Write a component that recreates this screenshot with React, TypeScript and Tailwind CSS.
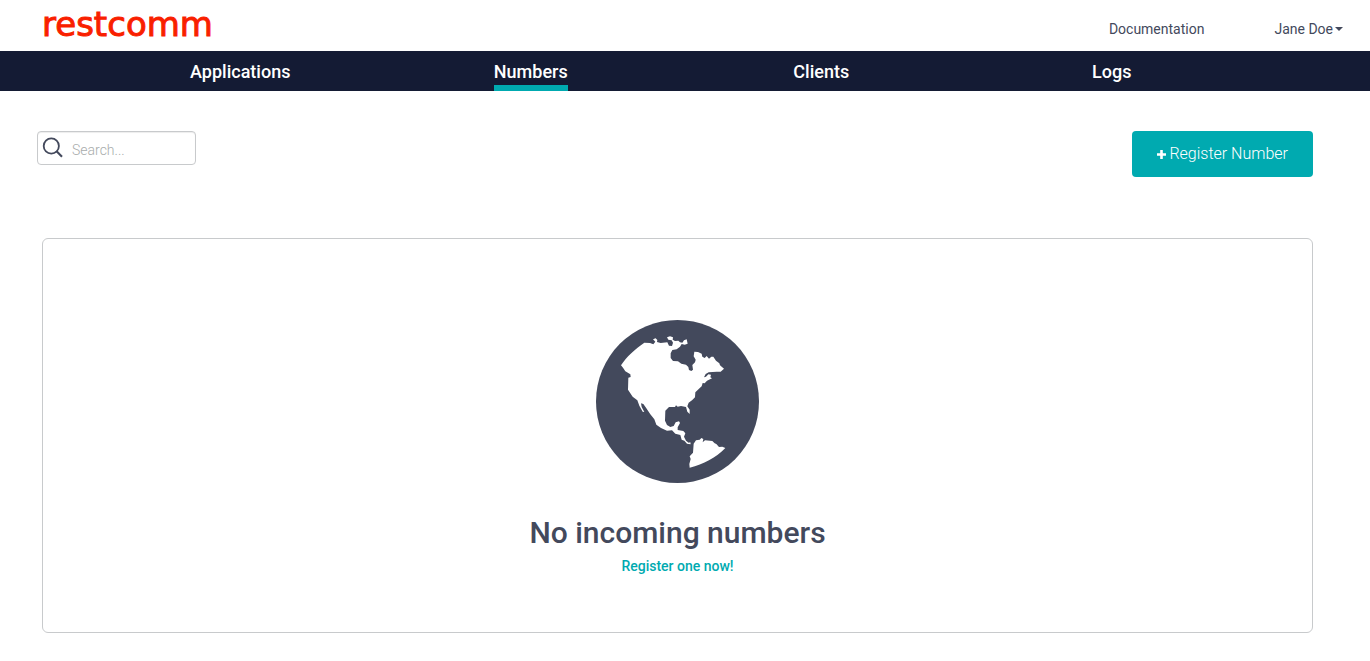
import React from 'react';

const navItems = [
  { label: 'Applications', active: false },
  { label: 'Numbers', active: true },
  { label: 'Clients', active: false },
  { label: 'Logs', active: false },
];

function Header() {
  return (
    <header className="flex h-[51px] items-start justify-between pl-[42px] pr-[27px]">
      <a
        href="#home"
        className="pt-1 font-['DejaVu_Sans',sans-serif] text-[34px] leading-10 text-[#f91f00] [-webkit-text-stroke:1px_#f91f00]"
      >
        restcomm
      </a>
      <div className="flex items-center gap-[70px] pt-[19px] text-sm text-[#43495c]">
        <a href="#documentation">Documentation</a>
        <button type="button" className="flex items-center gap-[2px]">
          Jane Doe
          <svg viewBox="0 0 8 4" className="h-1 w-2" fill="currentColor" aria-hidden="true">
            <path d="M0 0h8L4 4z" />
          </svg>
        </button>
      </div>
    </header>
  );
}

function MainNav() {
  return (
    <nav className="flex h-10 bg-[#141b34] pl-[95px] pr-[113px]">
      {navItems.map((item) => (
        <div key={item.label} className="flex flex-1 justify-center">
          <a
            href={`#${item.label.toLowerCase()}`}
            aria-current={item.active ? 'page' : undefined}
            className={
              item.active
                ? 'border-b-6 border-[#00aab0] pt-[7px] text-lg font-medium leading-7 text-white'
                : 'border-b-6 border-transparent pt-[7px] text-lg font-medium leading-7 text-white'
            }
          >
            {item.label}
          </a>
        </div>
      ))}
    </nav>
  );
}

function Toolbar() {
  return (
    <div className="flex items-start justify-between pl-[37px] pr-[57px]">
      <label className="flex h-[34px] w-[159px] items-center rounded border border-[#c8cacc] pl-1 shadow-[inset_0_1px_1px_rgba(0,0,0,0.075)]">
        <span className="sr-only">Search numbers</span>
        <svg viewBox="0 0 22 22" className="size-[22px] shrink-0" fill="none" stroke="#43495c" aria-hidden="true">
          <circle cx="9.3" cy="9" r="7.6" strokeWidth="1.8" />
          <path d="M14.6 14.3 20 19.8" strokeWidth="2.1" />
        </svg>
        <input
          type="text"
          placeholder="Search..."
          className="ml-2 h-full w-full min-w-0 bg-transparent pt-1 text-sm font-light text-[#43495c] outline-none placeholder:text-[#a8acac]"
        />
      </label>
      <button
        type="button"
        className="flex h-[46px] items-center justify-center gap-[3px] rounded bg-[#00aab0] px-[25px] text-base font-light text-white"
      >
        <svg viewBox="0 0 9 9" className="size-[9px]" fill="none" stroke="currentColor" strokeWidth="2.6" aria-hidden="true">
          <path d="M4.5 0v9M0 4.5h9" />
        </svg>
        Register Number
      </button>
    </div>
  );
}

function Globe() {
  return (
    <svg viewBox="18 29 489 489" className="size-[163px]" aria-hidden="true">
      <circle cx="262.5" cy="273.5" r="244.5" fill="#43495c" />
      <g fill="#fff">
        <path d="M93 165 C110 139 135 116 163 97 L180 98 L190 102 L196 94 L189 87 L197 84 L202 89 L201 95 L212 98 L232 96 L237 106 L246 107 L249 97 L245 90 L235 88 L231 81 L240 78 L249 81 L248 88 L255 92 L265 91 L270 96 L277 97 L282 90 L290 87 L293 100 L284 103 L275 101 L270 109 L260 117 L247 119 L242 129 L242 143 L249 152 L264 153 L274 160 L288 163 L295 170 L297 179 L304 182 L309 178 L307 164 L315 156 L317 148 L311 138 L313 124 L324 125 L335 130 L337 139 L344 143 L350 137 L357 145 L364 139 L370 139 L378 151 L388 159 L390 165 L402 175 L392 184 L380 184 L356 186 L347 191 L342 201 L348 199 L355 192 L363 193 L361 201 L366 204 L351 211 L344 219 L338 218 L335 228 L327 235 L316 246 L315 261 L306 270 L296 277 L292 288 L299 298 L299 311 L292 304 L288 290 L273 287 L263 289 L258 285 L255 290 L237 290 L226 301 L225 331 L231 344 L241 350 L251 347 L257 336 L267 333 L270 338 L263 351 L263 359 L280 362 L286 369 L282 379 L288 391 L296 397 L301 396 L302 402 L291 400 L283 391 L275 388 L271 374 L256 370 L246 360 L231 361 L213 353 L199 343 L193 327 L181 312 L169 294 L160 281 L153 279 L155 290 L163 305 L158 304 L148 286 L142 270 L128 259 L114 238 L115 202 L122 200 L121 192 L106 183 L99 172Z" />
        <path d="M311 400 L318 390 L329 388 L334 383 L340 386 L338 396 L345 390 L367 392 L374 399 L379 401 L387 410 L397 409 L406 413 C375 444 342 461 299 472 L298 461 L302 446 L299 438 L309 427Z" />
      </g>
    </svg>
  );
}

function EmptyState() {
  return (
    <section className="pl-[42px] pr-[57px]">
      <div className="flex flex-col items-center rounded-md border border-[#c8cacc] pb-[54px] pt-[81px]">
        <Globe />
        <h1 className="mt-8 text-[30px] font-medium leading-9 text-[#43495c]">No incoming numbers</h1>
        <a href="#register" className="mt-[3px] text-sm font-medium leading-6 text-[#00aab0]">
          Register one now!
        </a>
      </div>
    </section>
  );
}

export default function App() {
  return (
    <div className="min-h-screen bg-white font-[Roboto,sans-serif]">
      <Header />
      <MainNav />
      <main className="flex flex-col gap-[61px] pb-7 pt-10">
        <Toolbar />
        <EmptyState />
      </main>
    </div>
  );
}
